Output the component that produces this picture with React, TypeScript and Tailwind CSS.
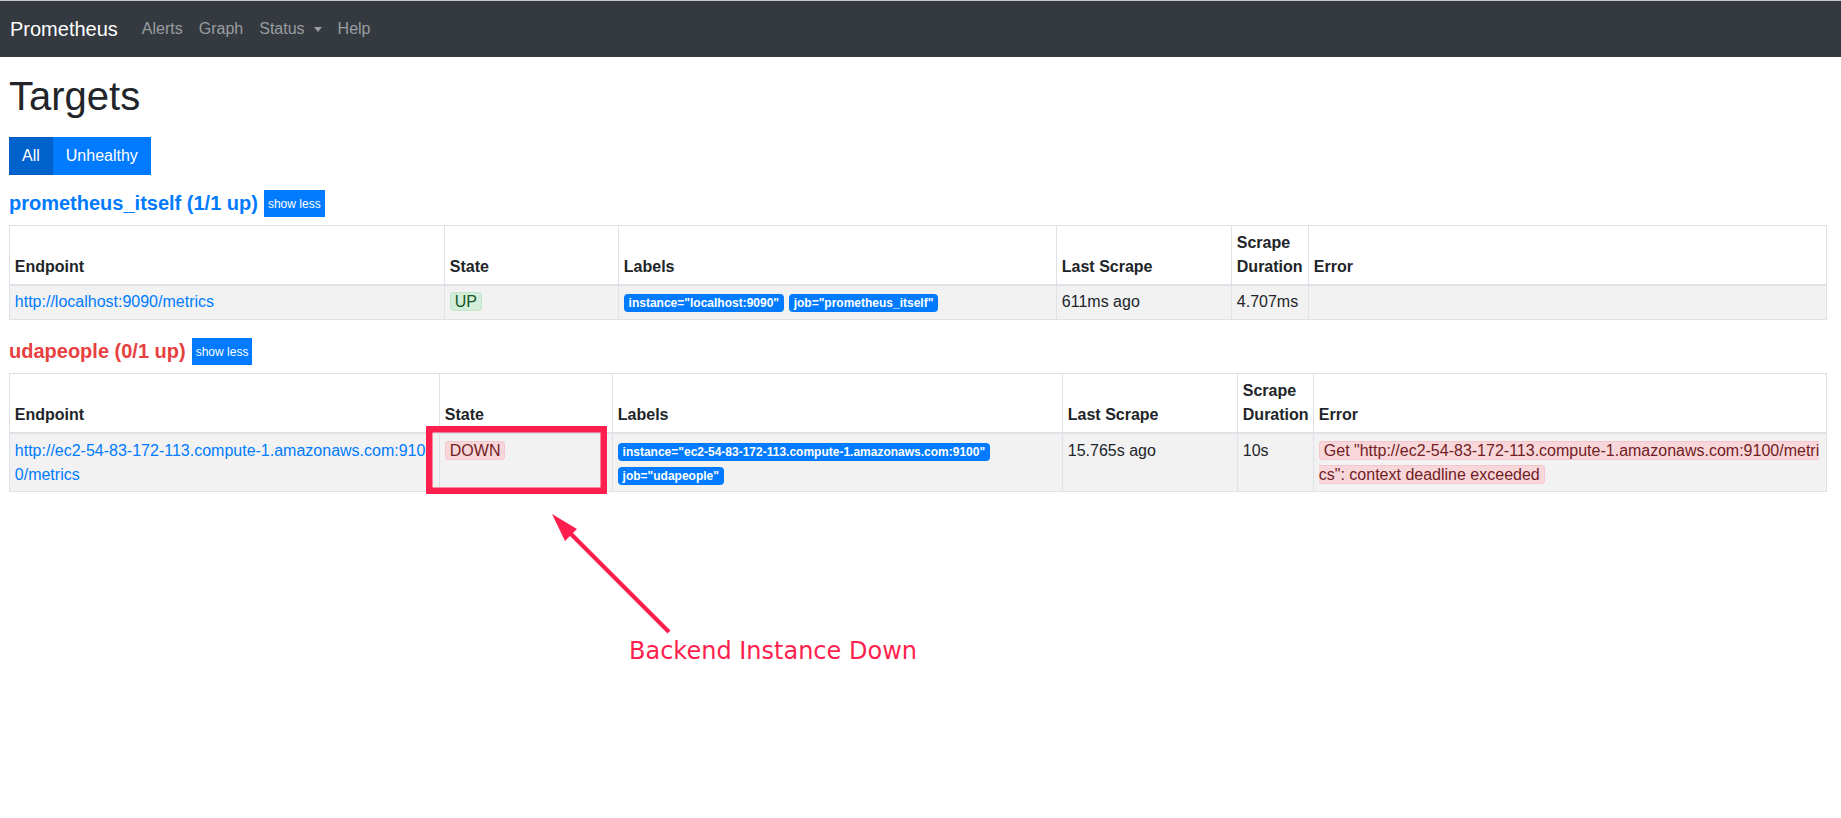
import React from "react";

const thCls =
  "border border-b-2 border-[#dee2e6] p-[0.3rem] text-left align-bottom font-bold";
const tdCls = "border border-[#dee2e6] p-[0.3rem] align-top";

const Label = ({ children }: { children: React.ReactNode }) => (
  <span className="mr-[5px] inline-block whitespace-nowrap rounded-[4px] bg-[#007bff] px-[4.8px] py-[3px] align-baseline text-[12px] font-bold leading-none text-white">
    {children}
  </span>
);

const Up = () => (
  <span className="rounded-[4px] border border-[#c3e6cb] bg-[#d4edda] px-[4px] text-[#155724]">
    UP
  </span>
);

const Down = () => (
  <span className="rounded-[4px] border border-[#f5c6cb] bg-[#f8d7da] px-[4px] text-[#721c24]">
    DOWN
  </span>
);

type TableProps = {
  cols: string[];
  endpoint: string;
  state: React.ReactNode;
  labels: string[];
  lastScrape: string;
  duration: string;
  error?: string;
};

const TargetTable = ({ cols, endpoint, state, labels, lastScrape, duration, error }: TableProps) => (
  <table className="w-full table-fixed border-collapse text-[16px] leading-[24px] text-[#212529]">
    <colgroup>
      {cols.map((c, i) => (
        <col key={i} className={c} />
      ))}
    </colgroup>
    <thead>
      <tr>
        <th className={thCls}>Endpoint</th>
        <th className={thCls}>State</th>
        <th className={thCls}>Labels</th>
        <th className={thCls}>Last Scrape</th>
        <th className={thCls}>Scrape Duration</th>
        <th className={thCls}>Error</th>
      </tr>
    </thead>
    <tbody>
      <tr className="bg-[#f2f2f2]">
        <td className={tdCls + " break-all"}>
          <a className="text-[#007bff]">{endpoint}</a>
        </td>
        <td className={tdCls}>{state}</td>
        <td className={tdCls}>
          {labels.map((l) => (
            <Label key={l}>{l}</Label>
          ))}
        </td>
        <td className={tdCls}>{lastScrape}</td>
        <td className={tdCls}>{duration}</td>
        <td className={tdCls + " break-all"}>
          {error && (
            <span className="rounded-[4px] border border-[#f5c6cb] bg-[#f8d7da] px-[4px] text-[#721c24]">
              {error}
            </span>
          )}
        </td>
      </tr>
    </tbody>
  </table>
);

const ShowLess = () => (
  <button className="ml-[6px] flex h-[27px] items-center bg-[#007bff] px-[4px] text-[12px] leading-[18px] text-white">
    show less
  </button>
);

export default function App() {
  return (
    <div className="relative min-h-screen bg-white font-['Liberation_Sans',Arial,sans-serif] text-[#212529]">
      <nav className="flex h-[57px] items-center border-t border-[#c4c4c4] bg-[#343a40] pl-[10px]">
        <span className="mr-4 text-[20px] leading-[30px] text-white">Prometheus</span>
        <div className="flex text-[16px] leading-[24px] text-[#9a9da0]">
          <span className="px-2">Alerts</span>
          <span className="px-2">Graph</span>
          <span className="flex items-center px-2">
            Status
            <span className="ml-[9px] inline-block h-0 w-0 border-x-[4px] border-t-[5px] border-x-transparent border-t-[#9a9da0]" />
          </span>
          <span className="px-2">Help</span>
        </div>
      </nav>

      <main className="pl-[9px] pr-[14px]">
        <h1 className="mt-[15px] text-[40px] leading-[48px] font-normal">Targets</h1>

        <div className="mt-[17px] flex text-[16px] leading-[24px] text-white">
          <button className="border border-[#005cbf] bg-[#0062cc] px-[12px] py-[6px]">All</button>
          <button className="border border-[#007bff] bg-[#007bff] px-[12px] py-[6px]">Unhealthy</button>
        </div>

        <section className="mt-[15px]">
          <div className="flex h-[27px] items-center">
            <span className="text-[20px] font-bold leading-[27px] text-[#007bff]">prometheus_itself (1/1 up)</span>
            <ShowLess />
          </div>
          <div className="mt-[8px]">
            <TargetTable
              cols={["w-[435px]", "w-[174px]", "w-[438px]", "w-[175px]", "w-[77px]", ""]}
              endpoint="http://localhost:9090/metrics"
              state={<Up />}
              labels={['instance="localhost:9090"', 'job="prometheus_itself"']}
              lastScrape="611ms ago"
              duration="4.707ms"
            />
          </div>
        </section>

        <section className="mt-[18px]">
          <div className="flex h-[27px] items-center">
            <span className="text-[20px] font-bold leading-[27px] text-[#e8403f]">udapeople (0/1 up)</span>
            <ShowLess />
          </div>
          <div className="mt-[8px]">
            <TargetTable
              cols={["w-[430px]", "w-[173px]", "w-[450px]", "w-[175px]", "w-[76px]", ""]}
              endpoint="http://ec2-54-83-172-113.compute-1.amazonaws.com:9100/metrics"
              state={<Down />}
              labels={['instance="ec2-54-83-172-113.compute-1.amazonaws.com:9100"', 'job="udapeople"']}
              lastScrape="15.765s ago"
              duration="10s"
              error={'Get "http://ec2-54-83-172-113.compute-1.amazonaws.com:9100/metrics": context deadline exceeded'}
            />
          </div>
        </section>
      </main>

      {/* annotation overlay */}
      <svg className="pointer-events-none absolute left-0 top-0" width="1841" height="818">
        <rect x="429.25" y="429.25" width="174.5" height="61.5" fill="none" stroke="#ff1f4e" strokeWidth="6.5" />
        <line x1="669" y1="632" x2="570" y2="533" stroke="#ff1f4e" strokeWidth="4.3" />
        <polygon points="552,514 577,529 565,541" fill="#ff1f4e" />
      </svg>
      <div className="pointer-events-none absolute left-[629px] top-[637px] font-['DejaVu_Sans',sans-serif] text-[24px] leading-[28px] whitespace-nowrap text-[#ff1f4e]">
        Backend Instance Down
      </div>
    </div>
  );
}
